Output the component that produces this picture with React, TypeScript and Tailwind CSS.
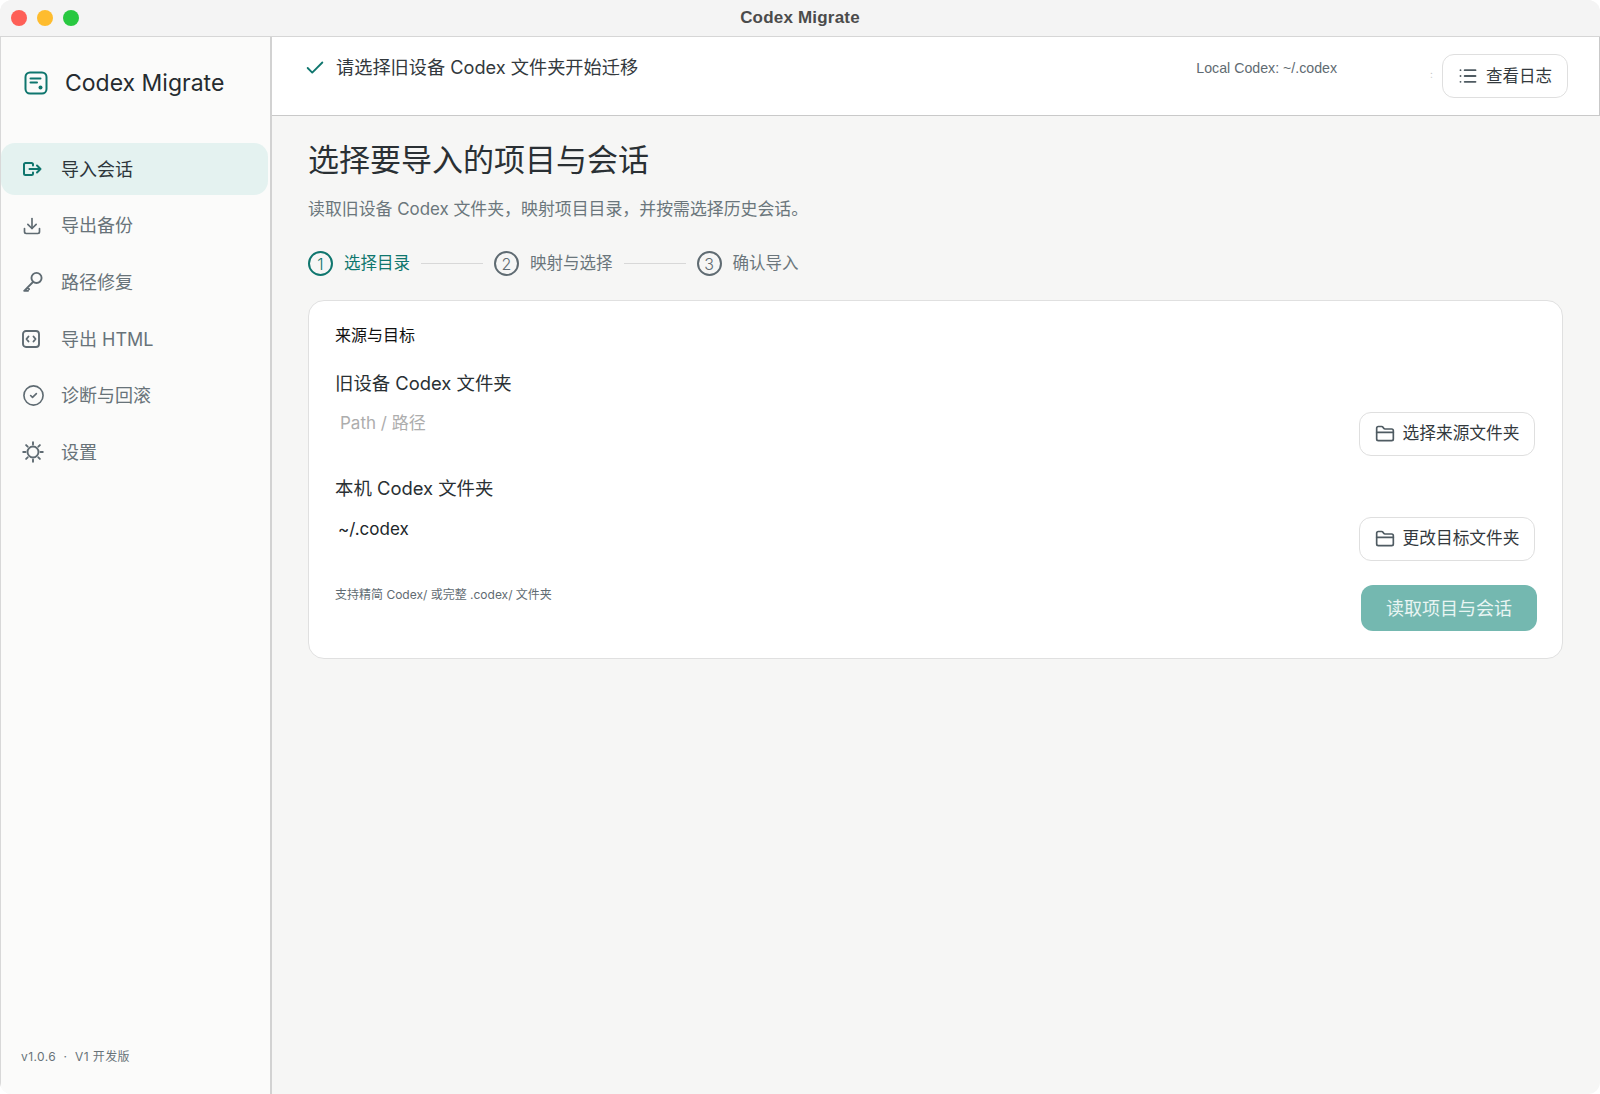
import { Check, Download, FolderClosed, List, CircleCheck } from "lucide-react";

const LOGIN_ICON = (
	<svg width="20" height="20" viewBox="0 0 20 20" fill="none" stroke="#0f766e" strokeWidth="2" strokeLinecap="round" strokeLinejoin="round">
		<path d="M11 6.5V5.5A1.5 1.5 0 0 0 9.5 4H3.5A1.5 1.5 0 0 0 2 5.5v9A1.5 1.5 0 0 0 3.5 16h6a1.5 1.5 0 0 0 1.5-1.5v-1" />
		<path d="M7.5 10H18.5M15 6.5l3.5 3.5-3.5 3.5" />
	</svg>
);

const KEY_ICON = (
	<svg width="22" height="22" viewBox="0 0 20 20" fill="none" stroke="#5f6b72" strokeWidth="1.7" strokeLinecap="round" strokeLinejoin="round">
		<circle cx="13.2" cy="6.3" r="4.6" />
		<path d="M10 10 2 18M2 18h3.5M5 15l1.5 1.5" />
	</svg>
);

const CODE_ICON = (
	<svg width="18" height="18" viewBox="0 0 18 18" fill="none" stroke="#5f6b72" strokeWidth="1.9" strokeLinecap="round" strokeLinejoin="round">
		<rect x="1" y="1" width="16" height="16" rx="3" />
		<path d="M6.5 6.5 4.5 9l2 2.5M11.5 6.5l2 2.5-2 2.5" />
	</svg>
);

const SUN_ICON = (
	<svg width="22" height="22" viewBox="0 0 22 22" fill="none" stroke="#5f6b72" strokeWidth="1.9" strokeLinecap="round">
		<circle cx="11" cy="11" r="5.5" />
		<path d="M11 1.2v2.3M11 18.5v2.3M1.2 11h2.3M18.5 11h2.3M4.1 4.1l1.6 1.6M16.3 16.3l1.6 1.6M4.1 17.9l1.6-1.6M16.3 5.7l1.6-1.6" />
	</svg>
);

const navItems = [
	{ label: "导入会话", icon: LOGIN_ICON, active: true },
	{ label: "导出备份", icon: <Download size={20} color="#5f6b72" strokeWidth={2} /> },
	{ label: "路径修复", icon: KEY_ICON },
	{ label: "导出 HTML", icon: CODE_ICON },
	{ label: "诊断与回滚", icon: <CircleCheck size={23} color="#5f6b72" strokeWidth={1.7} /> },
	{ label: "设置", icon: SUN_ICON },
];

const Step = ({ num, label, active }: { num: number; label: string; active?: boolean }) => (
	<div className="flex items-center gap-[11px]">
		<div
			className={`flex h-[25px] w-[25px] items-center justify-center rounded-full border-2 text-[16px] font-light ${
				active ? "border-[#0f766e] text-[#0f766e]" : "border-[#5f6b72] text-[#5f6b72]"
			}`}
		>
			{num}
		</div>
		<span className={`text-[16.5px] ${active ? "text-[#0f766e]" : "text-[#6b767c]"}`}>{label}</span>
	</div>
);

const FolderButton = ({ label }: { label: string }) => (
	<button className="flex h-[44px] w-[176px] shrink-0 items-center justify-center gap-2 rounded-[12px] border border-[#dfdfdf] bg-white text-[16.7px] text-[#33393d]">
		<FolderClosed size={20} color="#4f5b62" strokeWidth={2} />
		{label}
	</button>
);

const App = () => {
	return (
		<div className="flex h-[1094px] w-[1600px] flex-col overflow-hidden rounded-[12px] bg-[#f6f6f5] font-['Inter','Noto_Sans_CJK_SC',sans-serif]">
			<div className="relative flex h-[37px] shrink-0 items-center justify-center border-b border-[#d6d6d6] bg-[#f4f4f4]">
				<div className="absolute left-[11px] flex gap-[10px]">
					<div className="h-[16px] w-[16px] rounded-full bg-[#fe5f57]" />
					<div className="h-[16px] w-[16px] rounded-full bg-[#febc2e]" />
					<div className="h-[16px] w-[16px] rounded-full bg-[#28c840]" />
				</div>
				<span className="font-['Liberation_Sans',sans-serif] text-[17px] font-bold tracking-[0.2px] text-[#4b4b4b]">Codex Migrate</span>
			</div>

			<div className="flex min-h-0 flex-1">
				<aside className="flex w-[272px] shrink-0 flex-col border-x-[1px] border-r-2 border-[#d2d2d2] border-l-[#d8d8d8] bg-[#fbfbfa] pb-[28px]">
					<div className="flex h-[106px] shrink-0 items-center gap-[17px] pb-[14px] pl-[23px]">
						<svg width="24" height="24" viewBox="0 0 24 24" fill="none" stroke="#0f766e" strokeWidth="2" strokeLinecap="round">
							<rect x="1.5" y="1.5" width="21" height="21" rx="4.5" />
							<path d="M6.5 7.5h10M6.5 11.5h6.5" />
							<circle cx="16.5" cy="16.5" r="2" fill="#0f766e" stroke="none" />
						</svg>
						<span className="text-[23px] text-[#262c30]">Codex Migrate</span>
					</div>
					<nav className="mr-[2px] flex flex-col gap-[4.7px]">
						{navItems.map((item) => (
							<div
								key={item.label}
								className={`flex h-[52px] items-center rounded-[14px] pl-[21px] text-[18px] ${
									item.active ? "bg-[#e4f2f0] text-[#2d363b]" : "text-[#687379]"
								}`}
							>
								<span className="flex w-[39px] shrink-0 items-center">{item.icon}</span>
								{item.label}
							</div>
						))}
					</nav>
					<div className="mt-auto pl-[20px] text-[12px] tracking-[0.4px] text-[#687379]">v1.0.6 &nbsp;·&nbsp; V1 开发版</div>
				</aside>

				<main className="flex min-w-0 flex-1 flex-col">
					<header className="flex h-[79px] shrink-0 items-start border-b border-r border-[#c9c9c9] bg-white pr-[31px]">
						<div className="flex flex-1 items-center gap-[10px] pl-[32px] pt-[17px]">
							<Check size={22} color="#0f766e" strokeWidth={2} />
							<span className="text-[18.2px] text-[#33393d]">请选择旧设备 Codex 文件夹开始迁移</span>
						</div>
						<span className="pt-[21px] font-['Liberation_Sans',sans-serif] text-[14.2px] text-[#5f6b72]">Local Codex: ~/.codex</span>
						<span className="ml-[93px] mr-[9px] pt-[27px] text-[10px] leading-[20px] text-[#c8c8c8]">:</span>
						<button className="mt-[17px] flex h-[44px] w-[126px] items-center justify-center gap-[8px] rounded-[12px] border border-[#dfdfdf] bg-white text-[16.5px] text-[#33393d]">
							<List size={20} color="#4f5b62" strokeWidth={2.2} />
							查看日志
						</button>
					</header>

					<div className="flex flex-col px-[36px] pr-[37px] pt-[20px]">
						<h1 className="text-[31px] leading-[48px] font-normal text-[#2a3034]">选择要导入的项目与会话</h1>
						<p className="mt-[12px] text-[16.9px] leading-[26px] text-[#6b767c]">读取旧设备 Codex 文件夹，映射项目目录，并按需选择历史会话。</p>
						<div className="mt-[29px] flex items-center gap-[11px]">
							<Step num={1} label="选择目录" active />
							<div className="h-px w-[62px] bg-[#d8d8d8]" />
							<Step num={2} label="映射与选择" />
							<div className="h-px w-[62px] bg-[#d8d8d8]" />
							<Step num={3} label="确认导入" />
						</div>

						<section className="mt-[24px] flex h-[359px] flex-col rounded-[16px] border border-[#e0e0e0] bg-white px-[26px] pr-[27px] pt-[23px]">
							<h2 className="text-[16px] leading-[22px] font-normal text-[#111]">来源与目标</h2>
							<div className="mt-[23px] text-[18.4px] leading-[28px] text-[#2a3034]">旧设备 Codex 文件夹</div>
							<div className="flex items-start justify-between">
								<span className="ml-[5px] mt-[13px] text-[17px] leading-[26px] text-[#adadad]">Path / 路径</span>
								<div className="mt-[15px]">
									<FolderButton label="选择来源文件夹" />
								</div>
							</div>
							<div className="mt-[18px] text-[18.4px] leading-[28px] text-[#2a3034]">本机 Codex 文件夹</div>
							<div className="flex items-start justify-between">
								<span className="ml-[3px] mt-[14px] text-[17px] leading-[26px] text-[#20262a]">~/.codex</span>
								<div className="mt-[15px]">
									<FolderButton label="更改目标文件夹" />
								</div>
							</div>
							<div className="mt-[24px] flex items-start justify-between">
								<span className="mt-[1px] text-[12px] leading-[18px] text-[#5f6b72]">支持精简 Codex/ 或完整 .codex/ 文件夹</span>
								<button className="-mr-[2px] h-[46px] w-[176px] rounded-[12px] bg-[#74b8b0] text-[18px] text-[#e9f5f3]">读取项目与会话</button>
							</div>
						</section>
					</div>
				</main>
			</div>
		</div>
	);
};

export default App;
